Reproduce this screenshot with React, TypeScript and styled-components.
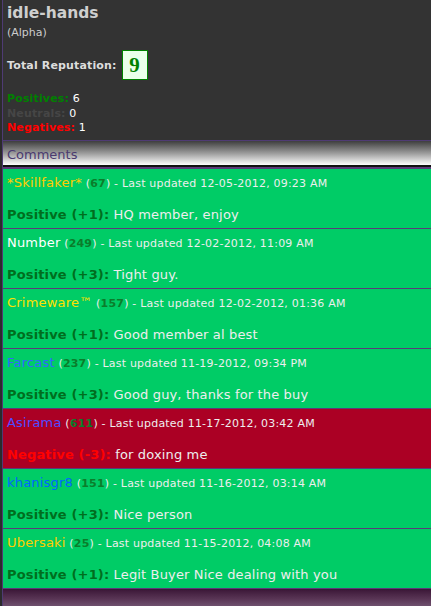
import React from "react";
import styled, { createGlobalStyle } from "styled-components";

const Global = createGlobalStyle`
  html, body { margin: 0; padding: 0; background: #2b2b2b; }
  body { font-family: "DejaVu Sans", Verdana, sans-serif; overflow: hidden; }
`;

const Page = styled.div`
  margin-left: 2px;
  border-left: 1px solid #4f3b74;
  background: #333333;
  min-height: 100vh;
  display: flex;
  flex-direction: column;
  box-sizing: border-box;
`;

const Profile = styled.div`
  height: 141px;
  box-sizing: border-box;
  padding: 4px 4px 0;
  border-bottom: 1px solid #4f3b74;
  color: #cccccc;
`;

const Title = styled.div`
  font-size: 15.5px;
  font-weight: bold;
  line-height: 19px;
  color: #cfcfcf;
`;

const Sub = styled.div`
  font-size: 11px;
  line-height: 14px;
  margin-top: 3px;
`;

const RepRow = styled.div`
  display: flex;
  align-items: center;
  margin-top: 10px;
  font-size: 11px;
  font-weight: bold;
  letter-spacing: 0.15px;
  color: #dddddd;
`;

const RepBox = styled.span`
  margin-left: 5px;
  width: 26px;
  height: 30px;
  box-sizing: border-box;
  border: 1px solid #008000;
  background: #eaffea;
  color: #008000;
  font-family: "Liberation Serif", "Times New Roman", serif;
  font-weight: bold;
  font-size: 21px;
  display: flex;
  align-items: center;
  justify-content: center;
`;

const Stats = styled.div`
  margin-top: 12px;
  font-size: 11px;
  line-height: 14.5px;
  letter-spacing: 0.15px;
`;

const StatLabel = styled.span<{ $c: string }>`
  color: ${(p) => p.$c};
  font-weight: bold;
`;

const StatVal = styled.span`
  color: #ffffff;
`;

const SectionHead = styled.div`
  height: 26px;
  box-sizing: border-box;
  padding: 2px 4px 0;
  display: flex;
  align-items: center;
  font-size: 13px;
  color: #4b3b70;
  background: linear-gradient(to bottom, #3e3e3e 0%, #9a9a9a 50%, #ffffff 100%);
  border-bottom: 2px solid #111111;
`;

const List = styled.div`
  border-top: 2px solid #5b3b7b;
`;

const Row = styled.div<{ $neg?: boolean }>`
  background: ${(p) => (p.$neg ? "#ab0024" : "#00cc66")};
  border-bottom: 1px solid #5b3b7b;
  padding: 6px 4px 0;
  height: 60px;
  box-sizing: border-box;
  color: #eeeeee;
  white-space: nowrap;
`;

const Meta = styled.div`
  font-size: 11px;
  line-height: 16px;
  height: 16px;
  letter-spacing: 0.2px;
`;

const User = styled.span<{ $c: string }>`
  font-size: 13px;
  color: ${(p) => p.$c};
`;

const Num = styled.b`
  color: #0b7d2b;
`;

const Body = styled.div`
  margin-top: 16px;
  font-size: 13px;
  line-height: 16px;
  letter-spacing: 0.15px;
`;

const Verdict = styled.b<{ $neg?: boolean }>`
  color: ${(p) => (p.$neg ? "#ff0000" : "#006e1e")};
`;

const Footer = styled.div`
  flex: 1;
  background: linear-gradient(to bottom, #3a1636 0%, #5a3656 60%, #6e506e 100%);
`;

type C = {
  user: string;
  color: string;
  rep: number;
  date: string;
  pts: string;
  text: string;
  neg?: boolean;
};

const comments: C[] = [
  { user: "*Skillfaker*", color: "#ffcc00", rep: 67, date: "12-05-2012, 09:23 AM", pts: "+1", text: "HQ member, enjoy" },
  { user: "Number", color: "#ffffff", rep: 249, date: "12-02-2012, 11:09 AM", pts: "+3", text: "Tight guy." },
  { user: "Crimeware™", color: "#ffe000", rep: 157, date: "12-02-2012, 01:36 AM", pts: "+1", text: "Good member al best" },
  { user: "Farcast", color: "#3366ff", rep: 237, date: "11-19-2012, 09:34 PM", pts: "+3", text: "Good guy, thanks for the buy" },
  { user: "Asirama", color: "#4d4dff", rep: 611, date: "11-17-2012, 03:42 AM", pts: "-3", text: "for doxing me", neg: true },
  { user: "khanisgr8", color: "#0066ff", rep: 151, date: "11-16-2012, 03:14 AM", pts: "+3", text: "Nice person" },
  { user: "Ubersaki", color: "#ffcc00", rep: 25, date: "11-15-2012, 04:08 AM", pts: "+1", text: "Legit Buyer Nice dealing with you" },
];

export default function App() {
  return (
    <>
      <Global />
      <Page>
        <Profile>
          <Title>idle-hands</Title>
          <Sub>(Alpha)</Sub>
          <RepRow>
            Total Reputation:
            <RepBox>9</RepBox>
          </RepRow>
          <Stats>
            <div>
              <StatLabel $c="#008000">Positives:</StatLabel> <StatVal>6</StatVal>
            </div>
            <div>
              <StatLabel $c="#464646">Neutrals:</StatLabel> <StatVal>0</StatVal>
            </div>
            <div>
              <StatLabel $c="#ff0000">Negatives:</StatLabel> <StatVal>1</StatVal>
            </div>
          </Stats>
        </Profile>
        <SectionHead>Comments</SectionHead>
        <List>
          {comments.map((c) => (
            <Row key={c.user} $neg={c.neg}>
              <Meta>
                <User $c={c.color}>{c.user}</User> (<Num>{c.rep}</Num>) - Last updated {c.date}
              </Meta>
              <Body>
                <Verdict $neg={c.neg}>
                  {c.neg ? "Negative" : "Positive"} ({c.pts}):
                </Verdict>{" "}
                {c.text}
              </Body>
            </Row>
          ))}
        </List>
        <Footer />
      </Page>
    </>
  );
}
